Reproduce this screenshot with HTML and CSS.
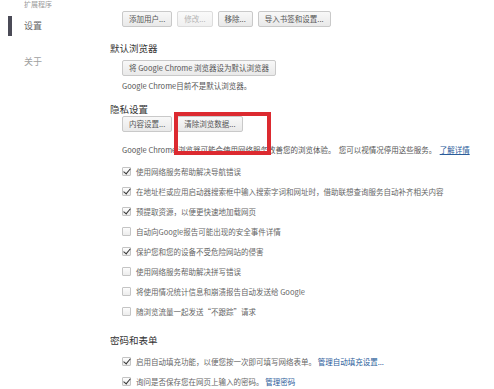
FILE: index.html
```html
<!DOCTYPE html>
<html lang="zh-CN">
<head>
    <meta charset="UTF-8">
    <title>设置</title>
    <link rel="stylesheet" href="styles.css">
</head>
<body>
    <div class="page">
        <div class="nav">
            <div class="nav-item nav-cut">扩展程序</div>
            <div class="nav-item active">设置</div>
            <div class="nav-item">关于</div>
        </div>

        <div class="main">
            <div class="btn-row">
                <span class="btn">添加用户...</span>
                <span class="btn disabled">修改...</span>
                <span class="btn">移除...</span>
                <span class="btn">导入书签和设置...</span>
            </div>

            <h3 class="section-title">默认浏览器</h3>
            <div class="section-body">
                <span class="btn">将 Google Chrome 浏览器设为默认浏览器</span>
                <p class="note">Google Chrome目前不是默认浏览器。</p>
            </div>

            <h3 class="section-title privacy-title">隐私设置</h3>
            <div class="section-body privacy-body">
                <div class="btn-row">
                    <span class="btn">内容设置...</span>
                    <span class="btn highlight">清除浏览数据...</span>
                </div>
                <p class="note privacy-note">Google Chrome 浏览器可能会使用网络服务改善您的浏览体验。 &nbsp;您可以视情况停用这些服务。 &nbsp;<a href="#" class="link">了解详情</a></p>

                <div class="option"><span class="check on"></span>使用网络服务帮助解决导航错误</div>
                <div class="option"><span class="check on"></span>在地址栏或应用启动器搜索框中输入搜索字词和网址时，借助联想查询服务自动补齐相关内容</div>
                <div class="option"><span class="check on"></span>预提取资源，以便更快速地加载网页</div>
                <div class="option"><span class="check"></span>自动向Google报告可能出现的安全事件详情</div>
                <div class="option"><span class="check on"></span>保护您和您的设备不受危险网站的侵害</div>
                <div class="option"><span class="check"></span>使用网络服务帮助解决拼写错误</div>
                <div class="option"><span class="check"></span>将使用情况统计信息和崩溃报告自动发送给 Google</div>
                <div class="option"><span class="check"></span>随浏览流量一起发送“不跟踪”请求</div>
            </div>

            <h3 class="section-title forms-title">密码和表单</h3>
            <div class="section-body forms-body">
                <div class="option"><span class="check on"></span>启用自动填充功能，以便您按一次即可填写网络表单。 <a href="#" class="link plain">管理自动填充设置...</a></div>
                <div class="option"><span class="check on"></span>询问是否保存您在网页上输入的密码。 <a href="#" class="link plain">管理密码</a></div>
            </div>
        </div>
    </div>
</body>
</html>
```

FILE: styles.css
```css
* {
    margin: 0;
    padding: 0;
    box-sizing: border-box;
}

body {
    font-family: "Noto Sans CJK SC", "Noto Sans", sans-serif;
    background: #ffffff;
    color: #444;
    font-size: 7.5px;
    overflow: hidden;
}

.page {
    display: flex;
    height: 389px;
}

/* left navigation */
.nav {
    width: 110px;
    flex-shrink: 0;
}

.nav-item {
    position: relative;
    padding-left: 24px;
    font-size: 9px;
    line-height: 20px;
    height: 20px;
    color: #a0a0a0;
    margin-bottom: 16px;
}

.nav-cut {
    font-size: 7px;
    line-height: 9px;
    height: 9px;
    margin-bottom: 7px;
    color: #9a9a9a;
}

.nav-item.active {
    color: #666;
}

.nav-item.active::before {
    content: "";
    position: absolute;
    left: 8px;
    top: 0;
    width: 4px;
    height: 20px;
    background: #4b4b57;
}

/* main column */
.main {
    flex: 1;
    padding-top: 11px;
}

.btn-row {
    display: flex;
    gap: 5px;
}

.main > .btn-row {
    margin-left: 12px;
}

.btn {
    display: inline-block;
    height: 16px;
    line-height: 14px;
    padding: 0 6px;
    border: 1px solid #c9c9c9;
    border-radius: 2px;
    background: linear-gradient(#f8f8f8, #e9e9e9);
    color: #555;
    font-size: 7.5px;
    white-space: nowrap;
}

.btn.disabled {
    color: #b4b4b4;
    border-color: #dcdcdc;
    background: linear-gradient(#fafafa, #f0f0f0);
}

.btn.highlight {
    position: relative;
}

.btn.highlight::after {
    content: "";
    position: absolute;
    left: -4px;
    top: -5px;
    width: 89px;
    height: 35px;
    border: 4px solid #dc2a30;
}

.section-title {
    font-size: 9.5px;
    font-weight: normal;
    color: #333;
    line-height: 14px;
    margin-top: 14px;
}

.privacy-title {
    margin-top: 11px;
    line-height: 12px;
}

.forms-title {
    margin-top: 12px;
}

.section-body {
    padding-left: 12px;
    margin-top: 5px;
}

.privacy-body {
    margin-top: 1px;
}

.forms-body {
    margin-top: 4px;
}

.note {
    line-height: 12px;
    margin-top: 4px;
    color: #555;
    white-space: nowrap;
}

.privacy-note {
    margin-top: 12px;
    margin-bottom: 5px;
}

.link {
    color: #2a5c9a;
    text-decoration: underline;
}

.link.plain {
    text-decoration: none;
}

.option {
    display: flex;
    align-items: center;
    height: 20px;
    color: #666;
    white-space: pre;
}

.check {
    position: relative;
    width: 9px;
    height: 9px;
    margin-right: 5px;
    border: 1px solid #c4c4c4;
    border-radius: 1px;
    background: linear-gradient(#fdfdfd, #ececec);
    flex-shrink: 0;
}

.check.on::after {
    content: "";
    position: absolute;
    left: 2px;
    top: -1px;
    width: 3px;
    height: 6px;
    border-right: 1.6px solid #333;
    border-bottom: 1.6px solid #333;
    transform: rotate(40deg);
}
```
